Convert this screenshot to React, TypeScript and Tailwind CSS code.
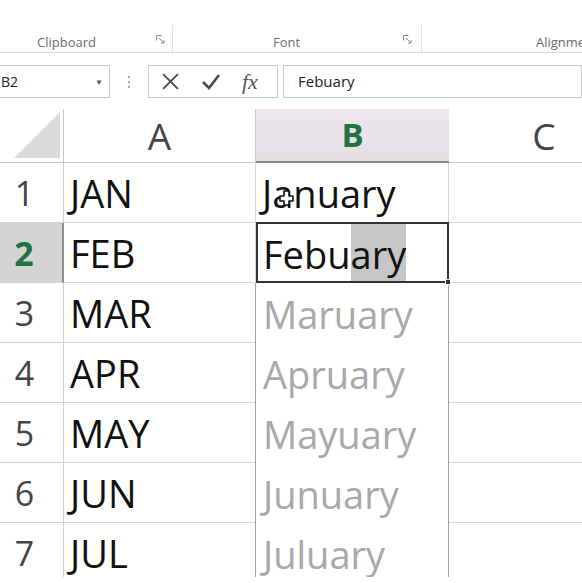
import { ReactNode } from "react";

const months = [
  ["JAN", "January"],
  ["FEB", "Febuary"],
  ["MAR", "Maruary"],
  ["APR", "Apruary"],
  ["MAY", "Mayuary"],
  ["JUN", "Junuary"],
  ["JUL", "Juluary"],
];

function Launcher() {
  return (
    <svg width="9" height="9" viewBox="0 0 9 9" className="mb-[2px]">
      <path d="M0.5 0.5h5M0.5 0.5v5" stroke="#8a8a8a" strokeWidth="1" fill="none" />
      <path d="M3 3l5 5M5 8h3V5" stroke="#8a8a8a" strokeWidth="1" fill="none" />
    </svg>
  );
}

function RibbonGroup({
  label,
  width,
  labelLeft,
  children,
}: {
  label: string;
  width: string;
  labelLeft: string;
  children?: ReactNode;
}) {
  return (
    <div className={`${width} flex items-end shrink-0`}>
      <span className={`${labelLeft} text-[13px] leading-[14px] pb-[3px] text-[#6b6b6b]`}>{label}</span>
      {children}
    </div>
  );
}

function RowHead({ n, active }: { n: number; active?: boolean }) {
  return (
    <div
      className={
        active
          ? "flex items-center justify-center pr-[14px] pt-[2px] bg-[#d4d4d4] border-b border-[#d0d0d0] border-r-2 border-r-[#8c8c8c] text-[34px] font-bold text-[#217346]"
          : "flex items-center justify-center pr-[14px] pt-[2px] border-b border-r border-[#d0d0d0] text-[34px] text-[#444]"
      }
    >
      {n}
    </div>
  );
}

function Cursor() {
  return (
    <svg width="15" height="16" viewBox="0 0 15 16" className="absolute left-[279px] top-[81px]">
      <path
        d="M5 1h5v5h4v5h-4v4H5v-4H1V6h4z"
        fill="#fff"
        stroke="#111"
        strokeWidth="1.6"
        strokeLinejoin="round"
      />
    </svg>
  );
}

const cellA = "border-b border-r border-[#d6d6d6] flex items-center pl-[6px] pt-[2px] text-[38px] text-[#111]";

export default function App() {
  return (
    <div className="w-[582px] h-[583px] bg-white overflow-hidden font-['Open_Sans',sans-serif]">
      {/* Ribbon group labels */}
      <div className="h-[53px] flex border-b border-[#dcdcdc]">
        <RibbonGroup label="Clipboard" width="w-[173px]" labelLeft="ml-[37px]">
          <span className="ml-auto mr-[7px] pb-[6px]">
            <Launcher />
          </span>
          <div className="w-px h-[27px] bg-[#e2e2e2]" />
        </RibbonGroup>
        <RibbonGroup label="Font" width="w-[249px]" labelLeft="ml-[100px]">
          <span className="ml-auto mr-[9px] pb-[6px]">
            <Launcher />
          </span>
          <div className="w-px h-[27px] bg-[#e2e2e2]" />
        </RibbonGroup>
        <RibbonGroup label="Alignment" width="w-[200px]" labelLeft="ml-[114px]" />
      </div>

      {/* Formula bar */}
      <div className="mt-[12px] h-[33px] flex text-[14px] text-[#222]">
        <div className="w-[111px] -ml-px border border-[#c8c8c8] flex items-center pl-[1px] pr-[6px]">
          <span>B2</span>
          <span className="ml-auto text-[8px] text-[#555]">▼</span>
        </div>
        <div className="w-[38px] flex flex-col items-center justify-center gap-[3px]">
          <span className="w-[2px] h-[2px] bg-[#aaa]" />
          <span className="w-[2px] h-[2px] bg-[#aaa]" />
          <span className="w-[2px] h-[2px] bg-[#aaa]" />
        </div>
        <div className="w-[130px] border border-[#c8c8c8] flex items-center pl-[12px]">
          <svg width="19" height="19" viewBox="0 0 18 18">
            <path d="M2 2l14 14M16 2L2 16" stroke="#4a4a4a" strokeWidth="1.7" />
          </svg>
          <svg width="20" height="18" viewBox="0 0 20 18" className="ml-[21px]">
            <path d="M2 9l6 6L18 2" stroke="#4a4a4a" strokeWidth="2.6" fill="none" />
          </svg>
          <span className="ml-[21px] font-['Liberation_Serif',serif] italic text-[22px] text-[#555] leading-none">
            fx
          </span>
        </div>
        <div className="flex-1 ml-[5px] border border-[#c8c8c8] flex items-center pl-[14px] text-[15px]">
          Febuary
        </div>
      </div>

      {/* Grid */}
      <div className="mt-[11px] h-[468px] overflow-hidden relative">
        <div className="grid grid-cols-[64px_192px_193px_190px] grid-rows-[54px_repeat(7,60px)]">
          {/* header row */}
          <div className="border-b border-r border-[#c4c4c4] flex items-end justify-end pb-[4px] pr-[3px]">
            <svg width="46" height="46" viewBox="0 0 46 46">
              <path d="M0 46L46 0v46z" fill="#dadada" />
            </svg>
          </div>
          <div className="border-b border-r border-[#c8c8c8] flex items-center justify-center text-[37px] text-[#444]">
            A
          </div>
          <div className="border-b-2 border-[#8a8a8a] bg-gradient-to-b from-[#efe6ef] to-[#e2dfe2] flex items-center justify-center text-[33px] font-bold text-[#217346]">
            B
          </div>
          <div className="border-b border-[#c8c8c8] flex items-center justify-center text-[37px] text-[#444]">C</div>

          {/* row 1 */}
          <RowHead n={1} />
          <div className={cellA}>{months[0][0]}</div>
          <div className={cellA}>{months[0][1]}</div>
          <div className="border-b border-[#d6d6d6]" />

          {/* row 2 */}
          <RowHead n={2} active />
          <div className={cellA}>{months[1][0]}</div>
          <div className="relative -mt-px border-2 border-[#333] flex items-stretch pl-[5px] text-[38px] text-[#111]">
            <span className="flex items-center pt-[3px]">Febu</span>
            <span className="flex items-center pt-[3px] bg-[#c6c6c6]">ary</span>
            <span className="absolute -right-[4px] -bottom-[4px] w-[6px] h-[6px] bg-[#333] border border-white" />
          </div>
          <div className="border-b border-[#d6d6d6]" />

          {/* rows 3-7 */}
          {months.slice(2).map(([short, long], i) => (
            <RowRest key={short} n={i + 3} short={short} long={long} />
          ))}
        </div>
        <Cursor />
      </div>
    </div>
  );
}

function RowRest({ n, short, long }: { n: number; short: string; long: string }) {
  return (
    <>
      <RowHead n={n} />
      <div className={cellA}>{short}</div>
      <div className="border-l border-r border-[#a0a0a0] -ml-px flex items-center pl-[7px] pt-[2px] text-[38px] text-[#a8a8a8]">
        {long}
      </div>
      <div className="border-b border-[#d6d6d6]" />
    </>
  );
}
